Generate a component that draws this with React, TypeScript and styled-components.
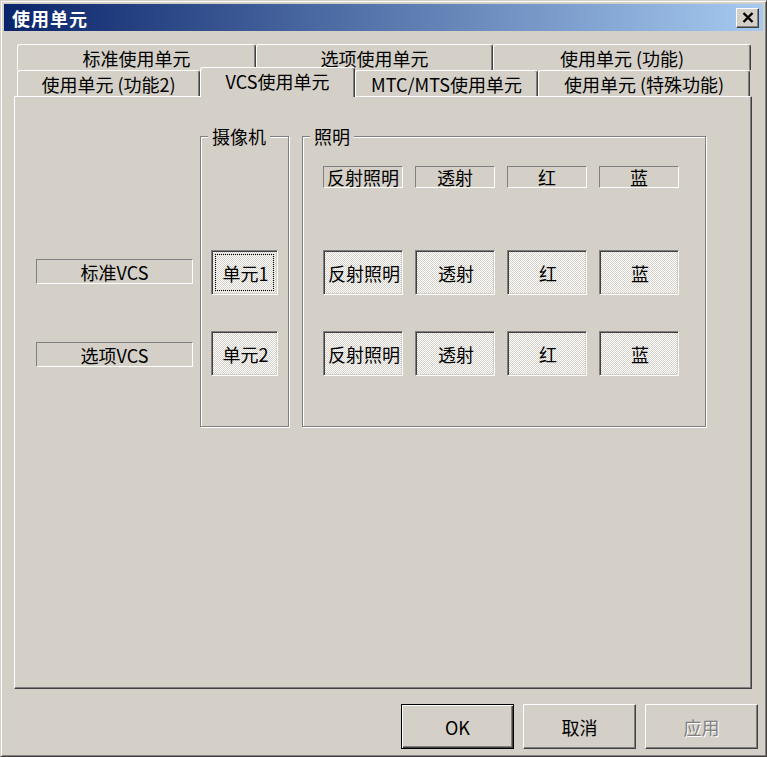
import React from "react";
import styled, { createGlobalStyle, css } from "styled-components";

const GlobalStyle = createGlobalStyle`
  html, body {
    margin: 0;
    padding: 0;
    background: #d4d0c8;
  }
  * {
    box-sizing: border-box;
  }
`;

const face = "#d4d0c8";
const font = `"Noto Sans CJK SC", "Noto Sans", sans-serif`;

const Window = styled.div`
  width: 767px;
  height: 757px;
  background: ${face};
  border: 1px solid;
  border-color: ${face} #404040 #404040 ${face};
  box-shadow: inset 1px 1px #fff, inset -1px -1px #808080;
  padding: 3px;
  display: flex;
  flex-direction: column;
  font-family: ${font};
  font-size: 18px;
  color: #000;
`;

const TitleBar = styled.div`
  height: 27px;
  flex: none;
  display: flex;
  align-items: center;
  justify-content: space-between;
  padding: 0 4px 0 8px;
  background: linear-gradient(to right, #0a246a, #a6caf0);
`;

const Caption = styled.span`
  color: #fff;
  font-weight: bold;
  font-size: 18px;
  line-height: 1;
  letter-spacing: 1px;
`;

const raised = css`
  background: ${face};
  border: 1px solid;
  border-color: #fff #404040 #404040 #fff;
  box-shadow: inset -1px -1px #808080;
`;

const CloseButton = styled.div`
  ${raised};
  width: 23px;
  height: 20px;
  display: flex;
  align-items: center;
  justify-content: center;
`;

const Body = styled.div`
  flex: 1;
  display: flex;
  flex-direction: column;
  padding: 13px 5px 0 10px;
`;

const TabRow = styled.div<{ $overlap?: boolean }>`
  display: flex;
  align-items: flex-end;
  padding-left: 3px;
  margin-top: ${(p) => (p.$overlap ? "-3px" : "0")};
`;

const Tab = styled.div<{ $w: number; $active?: boolean }>`
  width: ${(p) => p.$w}px;
  height: ${(p) => (p.$active ? 30 : 26)}px;
  flex: none;
  display: flex;
  align-items: center;
  justify-content: center;
  background: ${face};
  border-left: 1px solid #fff;
  border-top: 1px solid #fff;
  border-right: 1px solid #404040;
  box-shadow: inset -1px 0 #808080;
  border-radius: 3px 3px 0 0;
  white-space: nowrap;
  line-height: 1;
  ${(p) =>
    p.$active &&
    css`
      position: relative;
      z-index: 1;
      margin-bottom: -1px;
      padding-bottom: 3px;
    `}
`;

const Panel = styled.div`
  height: 593px;
  flex: none;
  margin-right: 6px;
  border: 1px solid;
  border-color: #fff #404040 #404040 #fff;
  box-shadow: inset -1px -1px #808080;
  display: flex;
  align-items: flex-start;
  padding: 28px 0 0 21px;
`;

const LabelColumn = styled.div`
  width: 157px;
  display: flex;
  flex-direction: column;
  gap: 58px;
  margin-top: 134px;
`;

const sunken = css`
  border: 1px solid;
  border-color: #808080 #fff #fff #808080;
  display: flex;
  align-items: center;
  justify-content: center;
  line-height: 1;
  white-space: nowrap;
`;

const StaticLabel = styled.div`
  ${sunken};
  height: 25px;
`;

const HeaderLabel = styled.div`
  ${sunken};
  height: 22px;
  margin-bottom: 26px;
`;

const Group = styled.fieldset<{ $w: number; $gap: number }>`
  width: ${(p) => p.$w}px;
  height: 302px;
  margin: 0 0 0 ${(p) => p.$gap}px;
  padding: 0;
  min-width: 0;
  border: 1px solid #808080;
  box-shadow: inset 1px 1px #fff, 1px 1px #fff;
`;

const Legend = styled.legend`
  margin-left: 7px;
  padding: 0 4px;
  height: 22px;
  line-height: 22px;
  background: ${face};
`;

const CameraStack = styled.div`
  display: flex;
  flex-direction: column;
  gap: 36px;
  padding: 103px 0 0 10px;
`;

const LightGrid = styled.div`
  display: grid;
  grid-template-columns: repeat(4, 80px);
  grid-template-rows: auto 45px 45px;
  column-gap: 12px;
  row-gap: 36px;
  padding: 19px 0 0 20px;
`;

const Toggle = styled.div<{ $w?: number; $focus?: boolean }>`
  width: ${(p) => p.$w ?? 80}px;
  height: 45px;
  border: 1px solid;
  border-color: #808080 #fff #fff #808080;
  box-shadow: inset 1px 1px #404040, inset -1px -1px ${face};
  background-color: #fff;
  background-image: conic-gradient(${face} 25%, #fff 0 50%, ${face} 0 75%, #fff 0);
  background-size: 2px 2px;
  display: flex;
  align-items: center;
  justify-content: center;
  padding: 0 0 0 2px;
  line-height: 1;
  white-space: nowrap;
  ${(p) =>
    p.$focus &&
    css`
      outline: 1px dotted #000;
      outline-offset: -5px;
    `}
`;

const ButtonBar = styled.div`
  display: flex;
  justify-content: flex-end;
  gap: 9px;
  margin-top: 15px;
`;

const PushButton = styled.div<{ $default?: boolean; $disabled?: boolean }>`
  ${raised};
  width: 113px;
  height: 45px;
  display: flex;
  align-items: center;
  justify-content: center;
  line-height: 1;
  ${(p) =>
    p.$default &&
    css`
      border: 1px solid #000;
      box-shadow: inset 1px 1px #fff, inset -1px -1px #404040, inset -2px -2px #808080;
    `}
  ${(p) =>
    p.$disabled &&
    css`
      color: #808080;
      text-shadow: 1px 1px #fff;
    `}
`;

const backTabs = [
  { label: "标准使用单元", w: 239 },
  { label: "选项使用单元", w: 237 },
  { label: "使用单元 (功能)", w: 258 },
];

const frontTabs = [
  { label: "使用单元 (功能2)", w: 183 },
  { label: "VCS使用单元", w: 155, active: true },
  { label: "MTC/MTS使用单元", w: 183 },
  { label: "使用单元 (特殊功能)", w: 212 },
];

const lights = ["反射照明", "透射", "红", "蓝"];

const App: React.FC = () => {
  return (
    <>
      <GlobalStyle />
      <Window>
        <TitleBar>
          <Caption>使用单元</Caption>
          <CloseButton>
            <svg width="12" height="11" viewBox="0 0 12 11">
              <path d="M1.5 1 L10.5 10 M10.5 1 L1.5 10" stroke="#000" strokeWidth="2.4" />
            </svg>
          </CloseButton>
        </TitleBar>
        <Body>
          <TabRow>
            {backTabs.map((t) => (
              <Tab key={t.label} $w={t.w}>
                {t.label}
              </Tab>
            ))}
          </TabRow>
          <TabRow $overlap>
            {frontTabs.map((t) => (
              <Tab key={t.label} $w={t.w} $active={t.active}>
                {t.label}
              </Tab>
            ))}
          </TabRow>
          <Panel>
            <LabelColumn>
              <StaticLabel>标准VCS</StaticLabel>
              <StaticLabel>选项VCS</StaticLabel>
            </LabelColumn>
            <Group $w={89} $gap={7}>
              <Legend>摄像机</Legend>
              <CameraStack>
                <Toggle $w={67} $focus>
                  单元1
                </Toggle>
                <Toggle $w={67}>单元2</Toggle>
              </CameraStack>
            </Group>
            <Group $w={404} $gap={13}>
              <Legend>照明</Legend>
              <LightGrid>
                {lights.map((l) => (
                  <HeaderLabel key={"h" + l}>{l}</HeaderLabel>
                ))}
                {lights.map((l) => (
                  <Toggle key={"a" + l}>{l}</Toggle>
                ))}
                {lights.map((l) => (
                  <Toggle key={"b" + l}>{l}</Toggle>
                ))}
              </LightGrid>
            </Group>
          </Panel>
          <ButtonBar>
            <PushButton $default>OK</PushButton>
            <PushButton>取消</PushButton>
            <PushButton $disabled>应用</PushButton>
          </ButtonBar>
        </Body>
      </Window>
    </>
  );
};

export default App;
